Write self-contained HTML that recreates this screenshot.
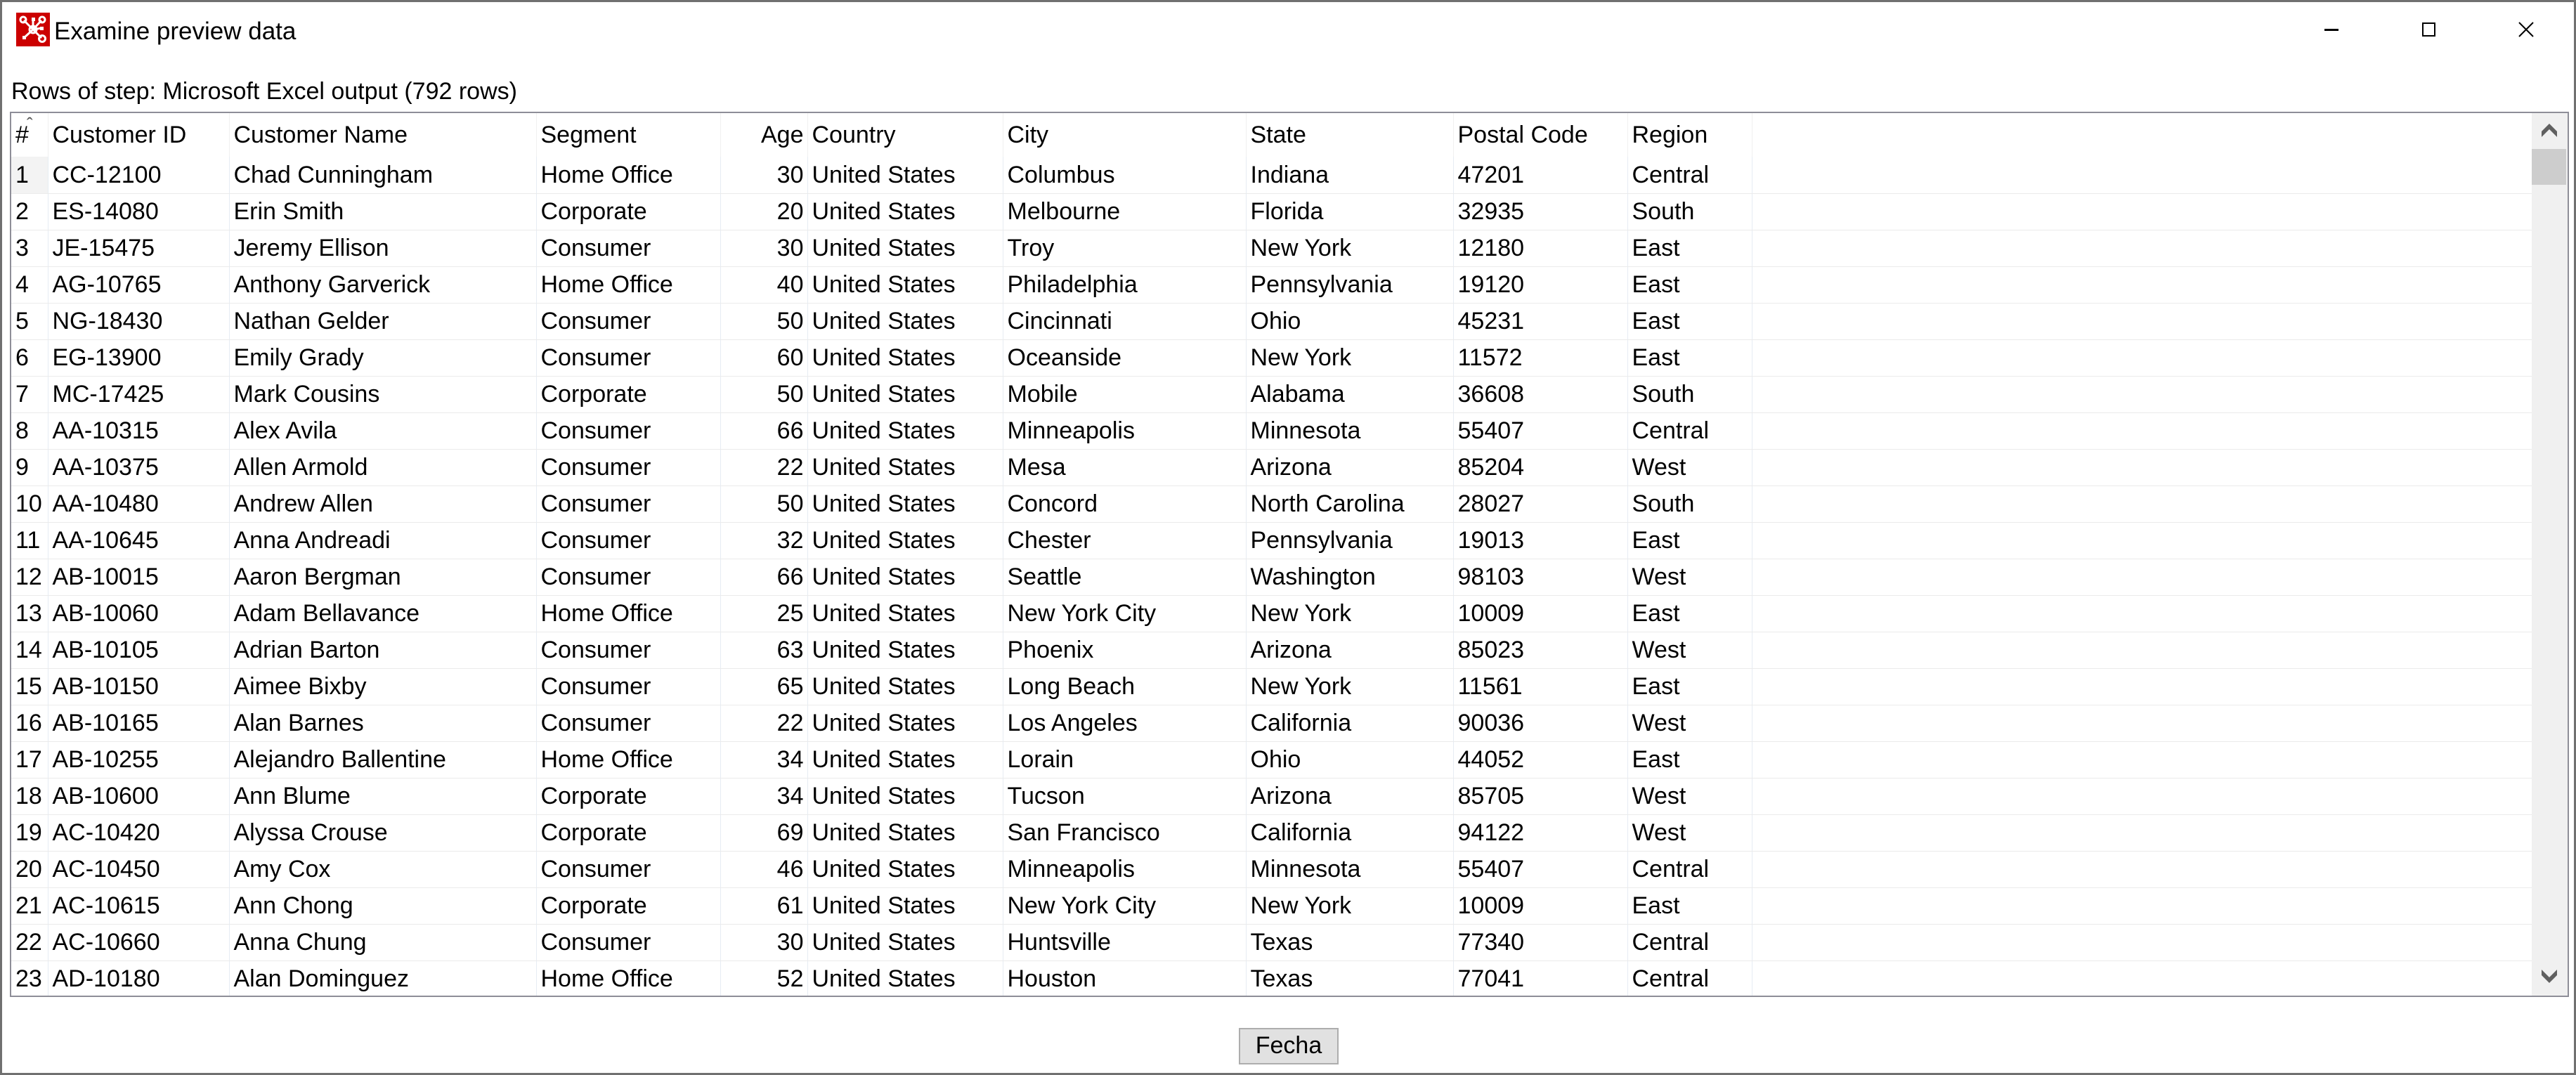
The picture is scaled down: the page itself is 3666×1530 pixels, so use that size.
<!DOCTYPE html>
<html><head><meta charset="utf-8"><style>
*{margin:0;padding:0;box-sizing:border-box}
html,body{width:3666px;height:1530px;overflow:hidden;background:#fff}
body{position:relative;font-family:"Liberation Sans",sans-serif;color:#000}
.abs{position:absolute}
#frame{left:0;top:0;width:3666px;height:1530px;border:3px solid #707070;pointer-events:none}
#title{left:77px;top:22px;font-size:35px;line-height:46px}
#rows{left:16px;top:108px;font-size:34px;line-height:44px}
#box{left:14px;top:159px;width:3642px;height:1260px;border:2px solid #8e8e98;overflow:hidden}
table{border-collapse:collapse;table-layout:fixed;font-size:34px;position:absolute;left:0;top:0}
td{border-right:1px solid #e6ecf3;border-bottom:1px solid #ebebeb;height:52px;padding:0 0 0 6px;white-space:nowrap;overflow:hidden;line-height:50px}
tr.h td{height:62px;border-bottom:none;border-right:1px solid #f0f0f0;line-height:60px}
td.r{text-align:right;padding:0 5px 0 0}
td.e{border-right:none}
#sb{left:3587px;top:0;width:51px;height:1256px;background:#f0f0f0}
#thumb{left:3587px;top:51px;width:49px;height:51px;background:#cdcdcd}
#btn{left:1763px;top:1463px;width:142px;height:52px;background:#e1e1e1;border:2px solid #adadad;font-size:34px;text-align:center;line-height:47px}
</style></head><body>
<svg class="abs" style="left:23px;top:18px" width="48" height="48" viewBox="0 0 48 48">
<rect width="48" height="48" fill="#cc0000"/>
<g stroke="#fff" stroke-width="3" fill="none">
<line x1="11" y1="11" x2="24" y2="24"/><line x1="36" y1="11" x2="24" y2="24"/><line x1="24" y1="10" x2="24" y2="24"/><line x1="24" y1="24" x2="12" y2="35"/><line x1="24" y1="24" x2="36" y2="36"/><line x1="24" y1="24" x2="36" y2="22"/>
<circle cx="10" cy="10" r="4"/><circle cx="37" cy="10" r="4"/><circle cx="24" cy="24" r="5"/><circle cx="37" cy="37" r="4.5"/>
</g>
<g fill="#fff"><rect x="22" y="7" width="5" height="5"/><rect x="34" y="20" width="5" height="5"/><rect x="9" y="33" width="5" height="5"/></g>
</svg>
<div class="abs" id="title">Examine preview data</div>
<div class="abs" style="left:3308px;top:41px;width:20px;height:3px;background:#000"></div>
<div class="abs" style="left:3447px;top:32px;width:19px;height:20px;border:2px solid #000"></div>
<svg class="abs" style="left:3584px;top:31px" width="22" height="22" viewBox="0 0 22 22"><path d="M1 1L21 21M21 1L1 21" stroke="#000" stroke-width="2"/></svg>
<div class="abs" id="rows">Rows of step: Microsoft Excel output (792 rows)</div>
<div class="abs" id="box">
<table>
<colgroup><col style="width:52px"><col style="width:258px"><col style="width:437px"><col style="width:262px"><col style="width:124px"><col style="width:278px"><col style="width:346px"><col style="width:295px"><col style="width:248px"><col style="width:177px"><col style="width:1111px"></colgroup>
<tr class="h"><td style="position:relative">#<span style="position:absolute;left:22px;top:-14px;font-size:26px;color:#555">&#710;</span></td><td>Customer ID</td><td>Customer Name</td><td>Segment</td><td class="r">Age</td><td>Country</td><td>City</td><td>State</td><td>Postal Code</td><td>Region</td><td class="e"></td></tr>
<tr><td style="background:#f3f3f3">1</td><td>CC-12100</td><td>Chad Cunningham</td><td>Home Office</td><td class="r">30</td><td>United States</td><td>Columbus</td><td>Indiana</td><td>47201</td><td>Central</td><td class="e"></td></tr>
<tr><td>2</td><td>ES-14080</td><td>Erin Smith</td><td>Corporate</td><td class="r">20</td><td>United States</td><td>Melbourne</td><td>Florida</td><td>32935</td><td>South</td><td class="e"></td></tr>
<tr><td>3</td><td>JE-15475</td><td>Jeremy Ellison</td><td>Consumer</td><td class="r">30</td><td>United States</td><td>Troy</td><td>New York</td><td>12180</td><td>East</td><td class="e"></td></tr>
<tr><td>4</td><td>AG-10765</td><td>Anthony Garverick</td><td>Home Office</td><td class="r">40</td><td>United States</td><td>Philadelphia</td><td>Pennsylvania</td><td>19120</td><td>East</td><td class="e"></td></tr>
<tr><td>5</td><td>NG-18430</td><td>Nathan Gelder</td><td>Consumer</td><td class="r">50</td><td>United States</td><td>Cincinnati</td><td>Ohio</td><td>45231</td><td>East</td><td class="e"></td></tr>
<tr><td>6</td><td>EG-13900</td><td>Emily Grady</td><td>Consumer</td><td class="r">60</td><td>United States</td><td>Oceanside</td><td>New York</td><td>11572</td><td>East</td><td class="e"></td></tr>
<tr><td>7</td><td>MC-17425</td><td>Mark Cousins</td><td>Corporate</td><td class="r">50</td><td>United States</td><td>Mobile</td><td>Alabama</td><td>36608</td><td>South</td><td class="e"></td></tr>
<tr><td>8</td><td>AA-10315</td><td>Alex Avila</td><td>Consumer</td><td class="r">66</td><td>United States</td><td>Minneapolis</td><td>Minnesota</td><td>55407</td><td>Central</td><td class="e"></td></tr>
<tr><td>9</td><td>AA-10375</td><td>Allen Armold</td><td>Consumer</td><td class="r">22</td><td>United States</td><td>Mesa</td><td>Arizona</td><td>85204</td><td>West</td><td class="e"></td></tr>
<tr><td>10</td><td>AA-10480</td><td>Andrew Allen</td><td>Consumer</td><td class="r">50</td><td>United States</td><td>Concord</td><td>North Carolina</td><td>28027</td><td>South</td><td class="e"></td></tr>
<tr><td>11</td><td>AA-10645</td><td>Anna Andreadi</td><td>Consumer</td><td class="r">32</td><td>United States</td><td>Chester</td><td>Pennsylvania</td><td>19013</td><td>East</td><td class="e"></td></tr>
<tr><td>12</td><td>AB-10015</td><td>Aaron Bergman</td><td>Consumer</td><td class="r">66</td><td>United States</td><td>Seattle</td><td>Washington</td><td>98103</td><td>West</td><td class="e"></td></tr>
<tr><td>13</td><td>AB-10060</td><td>Adam Bellavance</td><td>Home Office</td><td class="r">25</td><td>United States</td><td>New York City</td><td>New York</td><td>10009</td><td>East</td><td class="e"></td></tr>
<tr><td>14</td><td>AB-10105</td><td>Adrian Barton</td><td>Consumer</td><td class="r">63</td><td>United States</td><td>Phoenix</td><td>Arizona</td><td>85023</td><td>West</td><td class="e"></td></tr>
<tr><td>15</td><td>AB-10150</td><td>Aimee Bixby</td><td>Consumer</td><td class="r">65</td><td>United States</td><td>Long Beach</td><td>New York</td><td>11561</td><td>East</td><td class="e"></td></tr>
<tr><td>16</td><td>AB-10165</td><td>Alan Barnes</td><td>Consumer</td><td class="r">22</td><td>United States</td><td>Los Angeles</td><td>California</td><td>90036</td><td>West</td><td class="e"></td></tr>
<tr><td>17</td><td>AB-10255</td><td>Alejandro Ballentine</td><td>Home Office</td><td class="r">34</td><td>United States</td><td>Lorain</td><td>Ohio</td><td>44052</td><td>East</td><td class="e"></td></tr>
<tr><td>18</td><td>AB-10600</td><td>Ann Blume</td><td>Corporate</td><td class="r">34</td><td>United States</td><td>Tucson</td><td>Arizona</td><td>85705</td><td>West</td><td class="e"></td></tr>
<tr><td>19</td><td>AC-10420</td><td>Alyssa Crouse</td><td>Corporate</td><td class="r">69</td><td>United States</td><td>San Francisco</td><td>California</td><td>94122</td><td>West</td><td class="e"></td></tr>
<tr><td>20</td><td>AC-10450</td><td>Amy Cox</td><td>Consumer</td><td class="r">46</td><td>United States</td><td>Minneapolis</td><td>Minnesota</td><td>55407</td><td>Central</td><td class="e"></td></tr>
<tr><td>21</td><td>AC-10615</td><td>Ann Chong</td><td>Corporate</td><td class="r">61</td><td>United States</td><td>New York City</td><td>New York</td><td>10009</td><td>East</td><td class="e"></td></tr>
<tr><td>22</td><td>AC-10660</td><td>Anna Chung</td><td>Consumer</td><td class="r">30</td><td>United States</td><td>Huntsville</td><td>Texas</td><td>77340</td><td>Central</td><td class="e"></td></tr>
<tr><td>23</td><td>AD-10180</td><td>Alan Dominguez</td><td>Home Office</td><td class="r">52</td><td>United States</td><td>Houston</td><td>Texas</td><td>77041</td><td>Central</td><td class="e"></td></tr>
</table>
<div class="abs" id="sb"></div>
<div class="abs" id="thumb"></div>
<svg class="abs" style="left:3600px;top:15px" width="24" height="20" viewBox="0 0 24 20"><path d="M12 0L23 11L23 19L12 8L1 19L1 11Z" fill="#606060"/></svg>
<svg class="abs" style="left:3600px;top:1218px" width="24" height="20" viewBox="0 0 24 20"><path d="M12 20L23 9L23 1L12 12L1 1L1 9Z" fill="#606060"/></svg>
</div>
<div class="abs" id="btn">Fecha</div>
<div class="abs" id="frame"></div>
</body></html>
